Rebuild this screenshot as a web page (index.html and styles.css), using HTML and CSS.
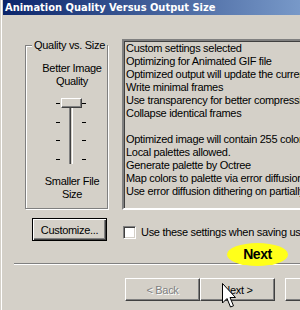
FILE: index.html
```html
<!DOCTYPE html>
<html lang="en">

<head>
    <meta charset="UTF-8">
    <meta name="viewport" content="width=device-width, initial-scale=1.0">
    <title>Animation Quality Versus Output Size</title>
    <link rel="stylesheet" href="styles.css">
</head>

<body>
    <div class="window">
        <div class="titlebar">Animation Quality Versus Output Size</div>

        <div class="content">
            <div class="left">
                <fieldset class="group">
                    <legend>Quality vs. Size</legend>
                    <div class="groupBody">
                        <div class="caption">Better Image<br>Quality</div>
                        <div class="slider">
                            <div class="ticks"><span></span><span></span><span></span><span></span></div>
                            <div class="track"></div>
                            <div class="ticks"><span></span><span></span><span></span><span></span></div>
                            <div class="thumb"></div>
                        </div>
                        <div class="caption captionBottom">Smaller File<br>Size</div>
                    </div>
                </fieldset>
                <button class="btn btnDefault customize">Customize...</button>
            </div>

            <div class="right">
                <div class="listbox">
                    <div>Custom settings selected</div>
                    <div>Optimizing for Animated GIF file</div>
                    <div>Optimized output will update the current image</div>
                    <div>Write minimal frames</div>
                    <div>Use transparency for better compression</div>
                    <div>Collapse identical frames</div>
                    <div>&nbsp;</div>
                    <div>Optimized image will contain 255 colors</div>
                    <div>Local palettes allowed.</div>
                    <div>Generate palette by Octree</div>
                    <div>Map colors to palette via error diffusion</div>
                    <div>Use error diffusion dithering on partially transparent pixels</div>
                </div>
                <label class="check"><span class="box"></span>Use these settings when saving using Save For Web</label>
            </div>
        </div>

        <div class="separator"></div>

        <div class="buttons">
            <button class="btn disabled">&lt; Back</button>
            <button class="btn">Next &gt;</button>
            <button class="btn cancel">Cancel</button>
        </div>

        <div class="note">Next</div>

        <svg class="cursor" width="14" height="27" viewBox="0 0 14 27">
            <path d="M0.5 0.5 L0.5 20 L5 15.5 L8.5 24 L11.5 22.8 L8 14.5 L13.5 14.5 Z" fill="#fff" stroke="#000" stroke-width="1" stroke-linejoin="miter" />
        </svg>
    </div>
</body>

</html>
```

FILE: styles.css
```css
html,
body {
    margin: 0;
    width: 300px;
    height: 310px;
    overflow: hidden;
}

body {
    background: #d4d0c8;
    font-family: "Liberation Sans", Arial, sans-serif;
    font-size: 11px;
    line-height: 13px;
    letter-spacing: -0.3px;
    color: #000;
}

.window {
    position: relative;
    height: 310px;
    padding-left: 3px;
    box-shadow: inset 1px 0 #d4d0c8, inset 2px 0 #fff;
}

.titlebar {
    width: 420px;
    height: 15px;
    padding-left: 2px;
    line-height: 15px;
    background: linear-gradient(to right, #0a246a, #a6caf0);
    color: #fff;
    font-family: "DejaVu Sans Condensed", "DejaVu Sans", sans-serif;
    font-weight: bold;
    font-size: 11px;
    letter-spacing: 0;
    white-space: nowrap;
}

.content {
    display: flex;
    gap: 13px;
    padding: 24px 0 0 22px;
}

.left {
    flex: 0 0 84px;
    display: flex;
    flex-direction: column;
}

/* etched group box */
.group {
    margin: 0;
    padding: 0;
    width: 83px;
    box-sizing: border-box;
    border: 1px solid #808080;
    box-shadow: inset 1px 1px #fff, 1px 1px #fff;
}

.group legend {
    margin-left: 6px;
    padding: 0 2px;
    background: #d4d0c8;
    white-space: nowrap;
}

.groupBody {
    display: flex;
    flex-direction: column;
    align-items: center;
    padding: 10px 0 7px 11px;
}

.caption {
    text-align: center;
    white-space: nowrap;
}

.captionBottom {
    margin-top: 10px;
}

.slider {
    position: relative;
    display: grid;
    grid-template-columns: 4px 4px 4px;
    column-gap: 9px;
    height: 68px;
    margin-top: 9px;
    margin-right: 3px;
}

.slider .ticks:last-of-type {
    margin-left: 1px;
}

.ticks {
    display: flex;
    flex-direction: column;
    justify-content: space-between;
    padding: 6px 0 5px;
}

.ticks span {
    display: block;
    height: 1px;
    background: #000;
}

.track {
    margin-top: 3px;
    margin-bottom: 1px;
    border-left: 1px solid #808080;
    border-right: 1px solid #fff;
    background: linear-gradient(to right, #404040 50%, #d4d0c8 50%);
}

.thumb {
    position: absolute;
    left: 5px;
    top: 1px;
    width: 21px;
    height: 10px;
    box-sizing: border-box;
    background: #d4d0c8;
    border: 1px solid;
    border-color: #fff #404040 #404040 #fff;
    box-shadow: inset -1px -1px #808080;
}

.btn {
    width: 75px;
    height: 23px;
    padding: 0;
    box-sizing: border-box;
    background: #d4d0c8;
    font-family: "Liberation Sans", Arial, sans-serif;
    font-size: 11px;
    letter-spacing: -0.3px;
    color: #000;
    border: 1px solid;
    border-color: #fff #404040 #404040 #fff;
    box-shadow: inset -1px -1px #808080, inset 1px 1px #d4d0c8;
}

.btnDefault {
    border: 1px solid #000;
    box-shadow: inset 1px 1px #fff, inset -1px -1px #404040, inset -2px -2px #808080;
}

.customize {
    margin: 9px 0 0 7px;
}

.right {
    display: flex;
    flex-direction: column;
}

.listbox {
    width: 220px;
    height: 171px;
    box-sizing: border-box;
    padding: 1px 2px;
    border: 2px solid;
    border-color: #808080 #fff #fff #808080;
    box-shadow: inset 1px 1px #404040, inset -1px -1px #d4d0c8;
    white-space: nowrap;
    overflow: hidden;
}

.check {
    display: flex;
    align-items: center;
    gap: 5px;
    margin: 16px 0 0 1px;
    white-space: nowrap;
}

.box {
    width: 13px;
    height: 13px;
    box-sizing: border-box;
    background: #fff;
    border: 1px solid;
    border-color: #808080 #fff #fff #808080;
    box-shadow: inset 1px 1px #404040, inset -1px -1px #d4d0c8;
}

.separator {
    margin: 22px 0 0 11px;
    border-top: 1px solid #808080;
    border-bottom: 1px solid #fff;
}

.buttons {
    display: flex;
    margin-top: 13px;
    padding-left: 122px;
}

.buttons .btn {
    flex: 0 0 75px;
}

.disabled {
    color: #808080;
    text-shadow: 1px 1px #fff;
}

.cancel {
    margin-left: 10px;
}

/* yellow annotation over the dialog */
.note {
    position: absolute;
    left: 227px;
    top: 243px;
    width: 61px;
    height: 23px;
    border-radius: 50%;
    background: #ffff1a;
    font-weight: bold;
    font-size: 14px;
    letter-spacing: -0.4px;
    line-height: 23px;
    text-align: center;
}

.cursor {
    position: absolute;
    left: 222px;
    top: 283px;
}
```
